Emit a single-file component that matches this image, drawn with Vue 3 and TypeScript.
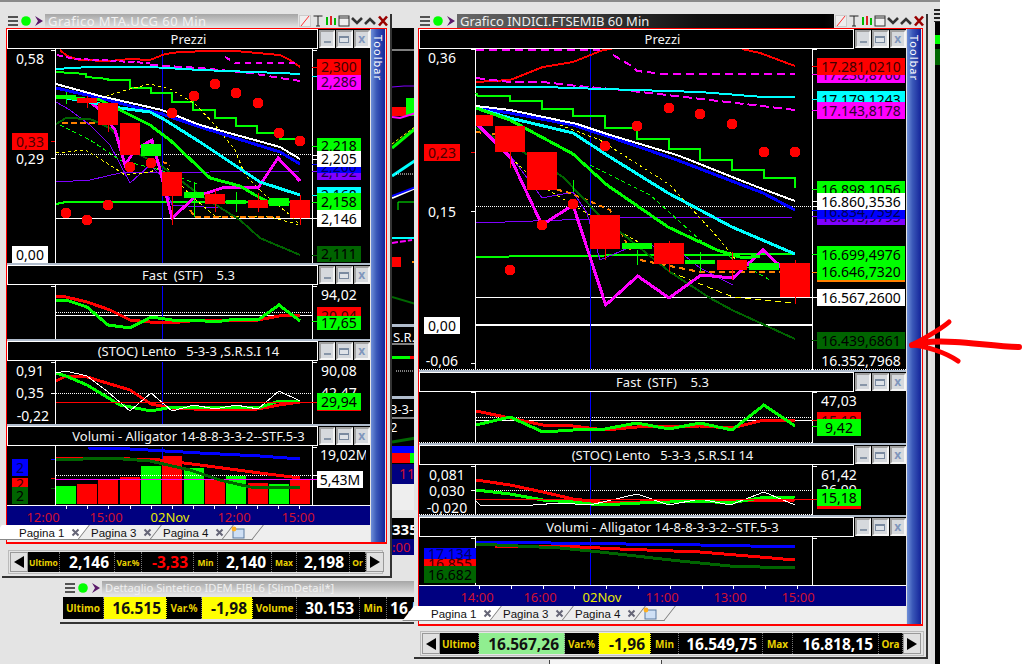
<script setup lang="ts">
type Line = { c: string; w: number; p: string; d?: string }
type Tag = [number, number, number, number, string, string, string]
type Bar = [number, number, number, number, string]
interface Panel {
  title: string; x: number; y: number; w: number; h: number; l: number; r: number
  lines: Line[]; bars?: Bar[]; dots?: [number, number][]; tags: Tag[]
}
interface Cell { t: string; w: number; k: string }
interface Tab { t: string; on?: boolean }

const R = '#ff0000', G = '#00ff00', B = '#0000ff', M = '#ff00ff', C = '#00ffff', W = '#ffffff'
const DG = '#006400', P = '#7f00ff', Y = '#ffff00', O = '#ff8000', K = '#000000', N = 'transparent'
const DOT = '1 1'

const ln = (c: string, w: number, p: string, d?: string): Line => ({ c, w, p, d })
const txt = (x: number, y: number, w: number, t: string): Tag => [x, y - 8, w, 16, N, W, t]

const leftPanels: Panel[] = [
  {
    title: 'Prezzi', x: 7, y: 49, w: 364, h: 214, l: 55.5, r: 312.5,
    lines: [
      ln(W, 1, '56,218 312,218'), ln(W, 1, '56,154.5 312,154.5', DOT), ln(B, 1, '162.5,50 162.5,263'),
      ln(R, 2, '60,50 67,56 80,60 110,61 130,59 150,60 165,54 180,52 210,51 235,51 280,55 290,60 300,67'),
      ln(M, 2, '57,55 75,59 100,60 130,62 150,63', '6 3'), ln(M, 2, '225,57 232,61 235,63 300,63', '6 5'),
      ln(M, 2, '150,65 200,68 250,73 280,78 300,81', '8 4'),
      ln(C, 2, '56,69 90,67 150,67 200,70 280,73 300,74'),
      ln(G, 2, '56,72 86,74 86,77 108,79 108,80 130,80 130,88 151,88 151,93 172,93 172,102 193,102 193,110 215,110 215,118 236,118 236,126 257,126 257,133 280,133 280,139 300,139'),
      ln(G, 2, '56,204 66,202 300,202'),
      ln(P, 1, '56,182 90,180 120,173 300,171'),
      ln(P, 1, '56,102 70,110 90,125 110,145 130,183 150,165 160,175 172,205 220,208'),
      ln(Y, 1, '100,98 130,89 150,84 170,89 195,104 215,125 235,150 245,175 265,195 290,215 300,225', '3 3'),
      ln(Y, 1, '56,153 85,150 110,165 125,175 150,172 165,166 190,195 215,216 270,217 300,225', '3 3'),
      ln(G, 1, '60,125 90,140 120,160 160,170 200,185', '4 3'),
      ln(O, 2, '62,123 95,123', '6 3'), ln(O, 2, '163,162 170,165', '4 3'), ln(O, 2, '190,210 195,217 280,217', '6 3'),
      ln(DG, 2, '56,124 66,118 90,119 110,128 130,150 160,165 200,195 240,220 260,238 300,255'),
      ln(M, 3, '88,100 100,110 115,130 125,165 135,150 152,140 160,170 172,218 195,197 225,187 258,188 278,158 300,181'),
      ln(B, 3, '56,88 100,98 162,114 200,127 280,152 300,164'),
      ln(W, 2, '56,84 100,96 162,110 200,125 280,147 300,159'),
      ln(C, 3, '56,96 100,104 120,108 150,112 165,120 200,142 260,182 300,195'),
      ln(G, 3, '56,97 100,100 130,115 150,125 170,140 210,178 240,186 255,195 270,203'),
      ln(G, 1, '66,92 66,104'), ln(G, 1, '194,182 194,217'), ln(G, 1, '236,192 236,212'),
      ln(R, 1, '87,96 87,108'), ln(R, 1, '108,125 108,132'), ln(R, 1, '172,195 172,225'), ln(R, 1, '215,190 215,212'), ln(R, 1, '258,193 258,212'), ln(R, 1, '300,195 300,225'),
      ln(R, 1, '312,67 317,67'), ln(C, 1, '312,76 317,76'), ln(G, 1, '312,146 317,146'), ln(W, 1, '312,155 317,155'), ln(W, 1, '312,159 317,159'), ln(B, 1, '312,164 317,164'), ln(P, 1, '312,171 317,171'),
      ln(C, 1, '312,195 317,195'), ln(G, 1, '312,202 317,202'), ln(W, 1, '312,218 317,218'), ln(DG, 1, '312,255 317,255'),
      ln(R, 1, '51,141 55,141'), ln(W, 1, '51,158 55,158'), ln(W, 1, '51,50 55,50'), ln(W, 1, '312,50 317,50')
    ],
    bars: [[56, 95, 20, 4, G], [77, 98, 20, 5, R], [98, 103, 20, 22, R], [120, 123, 20, 32, R], [141, 144, 20, 12, G], [162, 172, 20, 24, R], [184, 192, 20, 6, G], [205, 194, 20, 10, R], [226, 200, 20, 4, G], [248, 200, 20, 8, R], [269, 198, 20, 8, G], [290, 200, 20, 18, R]],
    dots: [[66, 213], [87, 220], [108, 205], [130, 167], [151, 163], [172, 113], [194, 96], [215, 84], [236, 93], [258, 103], [279, 133], [300, 141]],
    tags: [
      txt(12, 59, 36, '0,58'), [12, 133, 36, 17, R, '#4a0000', '0,33'], txt(12, 159, 36, '0,29'), [12, 246, 36, 17, W, K, '0,00'],
      [317, 74, 44, 16, M, '#300030', '2,286'], [317, 59, 44, 16, R, '#400000', '2,300'],
      [317, 138, 44, 16, G, K, '2,218'], [317, 164, 44, 16, P, '#14003a', '2,192'], [317, 161, 44, 12, B, '#000050', '2,200'], [317, 151, 44, 16, W, K, '2,205'],
      [317, 187, 44, 16, C, K, '2,168'], [317, 193, 44, 17, G, K, '2,158'], [317, 210, 44, 17, W, K, '2,146'], [317, 246, 44, 16, DG, K, '2,111']
    ]
  },
  {
    title: 'Fast  (STF)    5.3', x: 7, y: 285, w: 364, h: 54, l: 55.5, r: 312.5,
    lines: [
      ln(W, 1, '56,312.5 312,312.5', DOT), ln(W, 1, '56,315.5 312,315.5'), ln(B, 1, '162.5,286 162.5,339'),
      ln(R, 3, '56,296 66,297 87,302 110,310 130,320 150,322 170,323 200,320 236,320 258,320 279,316 300,315'),
      ln(G, 3, '56,300 66,300 87,307 108,325 130,328 151,317 172,320 194,320 215,322 236,319 258,320 279,305 300,321'),
      ln(W, 1, '312,286 317,286'), ln(W, 1, '51,286 55,286'), ln(G, 1, '312,321 317,321')
    ],
    tags: [txt(320, 295, 38, '94,02'), [317, 307, 44, 17, R, '#400000', '20,04'], [317, 316, 44, 14, G, K, '17,65']]
  },
  {
    title: '(STOC) Lento   5-3-3 ,S.R.S.I 14', x: 7, y: 361, w: 364, h: 63, l: 55.5, r: 312.5,
    lines: [
      ln(W, 1, '56,393.5 312,393.5', DOT), ln(B, 1, '162.5,362 162.5,424'),
      ln(R, 3, '56,381 66,376 87,377 130,390 151,404 172,408 194,409 215,410 258,409 279,405 300,402'),
      ln(G, 3, '56,373 66,376 87,385 120,405 151,411 172,407 194,407 215,408 236,407 258,408 279,401 300,402'),
      ln(W, 1, '56,373 66,371 87,376 108,392 130,411 151,393 172,411 194,405 215,409 236,405 258,409 279,391 300,401'),
      ln(R, 1, '56,402.5 317,402.5'), ln(W, 1, '51,393.5 55,393.5'), ln(W, 1, '51,362 55,362'), ln(W, 1, '312,362 317,362')
    ],
    tags: [
      txt(12, 371, 36, '0,91'), txt(12, 393, 36, '0,35'), txt(15, 416, 36, '-0,22'),
      txt(320, 371, 38, '90,08'), txt(320, 393, 38, '42,47'), [317, 409, 44, 2, R, N, ''], [317, 393, 44, 17, G, K, '29,94']
    ]
  },
  {
    title: 'Volumi - Alligator 14-8-8-3-3-2--STF.5-3', x: 7, y: 446, w: 364, h: 59, l: 55.5, r: 312.5,
    lines: [
      ln(W, 1, '56,475 312,475', DOT),
      ln(B, 1, '162.5,447 162.5,460'),
      ln(M, 1, '56,479.5 317,479.5'),
      ln(B, 3, '88,448 130,449 200,453 260,456 300,459'),
      ln(R, 3, '56,458 100,458 160,460 200,465 260,473 300,478'),
      ln(DG, 3, '56,460 110,458 150,461 190,470 220,480 250,487 300,488'),
      ln(W, 1, '312,447 317,447'), ln(B, 1, '51,459.5 55,459.5'), ln(R, 1, '51,478.5 55,478.5'), ln(DG, 1, '51,488.5 55,488.5'), ln(W, 1, '312,475 317,475')
    ],
    bars: [[56, 486, 20, 18, G], [77, 484, 20, 20, R], [98, 480, 20, 24, R], [120, 477, 20, 27, R], [141, 466, 20, 38, G], [162, 456, 20, 48, R], [184, 468, 20, 36, G], [205, 480, 20, 24, R], [226, 476, 20, 28, G], [248, 483, 20, 21, R], [269, 484, 20, 20, G], [290, 480, 20, 24, R]],
    tags: [
      [12, 459, 16, 17, B, '#000060', '2'], [12, 478, 16, 12, R, '#400000', '2'], [12, 487, 16, 17, DG, K, '2'],
      txt(320, 455, 46, '19,02M'), [317, 471, 46, 17, W, K, '5,43M']
    ]
  }
]

const rightPanels: Panel[] = [
  {
    title: 'Prezzi', x: 419, y: 49, w: 488, h: 321, l: 475.5, r: 812.5,
    lines: [
      ln(W, 1, '476,297.5 812,297.5'), ln(W, 2, '476,325 812,325'), ln(W, 1, '476,206.5 812,206.5', DOT), ln(W, 1, '419,369.5 907,369.5', DOT), ln(B, 1, '590.5,49 590.5,369'),
      ln(R, 2, '476,82 510,80 543,67 573,62 603,50 612,49'), ln(R, 2, '742,49 760,53 795,66'),
      ln(M, 2, '476,50 600,50', '8 5'), ln(M, 2, '613,55 630,65 637,71 655,73 662,74 795,74', '8 5'),
      ln(M, 2, '476,78 510,82 543,82 577,86 623,90 667,95 710,100 753,105 795,110', '9 4'),
      ln(C, 2, '476,87 543,87 603,89 700,92 763,97 795,97'),
      ln(G, 2, '476,93 478,96 510,96 510,101 542,101 542,109 573,109 573,116 605,116 605,128 637,128 637,139 669,139 669,149 700,149 700,160 732,160 732,170 764,170 764,178 795,178 795,188'),
      ln(G, 2, '476,257 543,256 795,254'),
      ln(P, 1, '476,223 620,218 795,217'),
      ln(P, 1, '476,125 510,155 542,198 573,192 587,213 600,260 640,243 680,252 700,268 733,285'),
      ln(Y, 1, '476,125 510,157 540,185 590,215 640,243', '3 3'), ln(Y, 1, '560,125 600,140 670,185 720,240 740,265', '3 3'),
      ln(Y, 1, '670,272 733,297 743,298 795,303', '6 4'), ln(G, 1, '590,165 650,195 700,240 770,280', '4 3'),
      ln(O, 2, '476,132 500,135', '5 3'), ln(O, 2, '540,185 570,193 610,210 630,250', '5 4'), ln(O, 2, '640,260 700,272 780,272', '6 4'),
      ln(DG, 2, '476,128 523,152 563,177 597,213 630,240 670,272 710,298 732,310 795,339'),
      ln(M, 3, '478,125 510,157 542,225 573,205 590,257 605.7,305 637.7,276 669,298 701,275 733,278 763,250 795,280'),
      ln(B, 3, '476,108 510,113 573,125 610,137 677,160 763,193 795,210'),
      ln(W, 2, '476,106 510,110 577,124 610,135 677,155 760,188 795,201'),
      ln(C, 3, '476,108 510,118 573,133 610,157 668,193 732,227 795,254'),
      ln(G, 3, '476,108 510,120 573,154 607,185 668,227 717,250 743,258 760,256'),
      ln(G, 1, '573,180 573,192'), ln(G, 1, '637,250 637,265'), ln(G, 1, '700,252 700,272'), ln(R, 1, '510,150 510,168'), ln(R, 1, '605,245 605,260'), ln(R, 1, '669,241 669,272'), ln(R, 1, '732,252 732,280'), ln(R, 1, '795,260 795,304'),
      ln(R, 1, '812,66 817,66'), ln(M, 1, '812,74 817,74'), ln(C, 1, '812,99 817,99'), ln(M, 1, '812,110 817,110'), ln(G, 1, '812,189 817,189'), ln(W, 1, '812,201 817,201'), ln(W, 1, '812,206 817,206'), ln(B, 1, '812,210 817,210'), ln(P, 1, '812,216 817,216'),
      ln(G, 1, '812,254 817,254'), ln(O, 1, '812,272 817,272'), ln(W, 1, '812,297 817,297'), ln(DG, 1, '812,340 817,340'),
      ln(R, 1, '471,152 475,152'), ln(W, 1, '471,211 475,211'), ln(W, 1, '471,49 475,49'), ln(W, 1, '471,363 475,363'), ln(W, 1, '812,49 817,49')
    ],
    bars: [[476, 115, 17, 11, R], [495, 126, 30, 26, R], [527, 152, 30, 38, R], [590, 215, 30, 34, R], [622, 243, 30, 6, G], [654, 243, 30, 21, R], [685, 260, 30, 4, G], [717, 260, 30, 10, R], [749, 263, 30, 7, G], [780, 263, 30, 34, R]],
    dots: [[510, 270], [542, 225], [573, 204], [605, 146], [637, 126], [669, 108], [700, 114], [732, 124], [764, 152], [795, 152]],
    tags: [
      txt(424, 58, 36, '0,36'), [424, 144, 36, 17, R, '#4a0000', '0,23'], txt(424, 212, 36, '0,15'), [424, 317, 36, 17, W, K, '0,00'], txt(424, 361, 36, '-0,06'),
      [817, 66, 88, 17, M, '#300030', '17.236,8700'], [817, 58, 88, 17, R, '#400000', '17.281,0210'],
      [817, 91, 88, 17, C, K, '17.179,1243'], [817, 102, 88, 17, M, '#300030', '17.143,8178'],
      [817, 181, 88, 17, G, K, '16.898,1056'], [817, 209, 88, 16, P, '#14003a', '16.813,9795'], [817, 204, 88, 15, B, '#000050', '16.834,7592'], [817, 193, 88, 17, W, K, '16.860,3536'],
      [817, 265, 88, 17, O, K, ''], [817, 246, 88, 17, G, K, '16.699,4976'], [817, 263, 88, 17, G, K, '16.646,7320'],
      [817, 289, 88, 17, W, K, '16.567,2600'], [817, 332, 88, 17, DG, K, '16.439,6861'], txt(817, 361, 88, '16.352,7968')
    ]
  },
  {
    title: 'Fast  (STF)    5.3', x: 419, y: 392, w: 488, h: 51, l: 475.5, r: 812.5,
    lines: [
      ln(W, 1, '476,417.5 812,417.5', DOT), ln(W, 1, '476,420.5 812,420.5'), ln(W, 1, '419,442.5 812,442.5', DOT), ln(B, 1, '590.5,392 590.5,443'),
      ln(R, 3, '476,411 510,418 543,425 573,426 605,430 637,427 700,426 732,428 764,420 795,421'),
      ln(G, 3, '476,425 510,417 543,432 573,430 605,429 637,423 669,429 700,423 732,430 764,405 795,426'),
      ln(R, 1, '812,420 817,420'), ln(G, 1, '812,426 817,426'), ln(W, 1, '812,392 817,392'), ln(W, 1, '471,392 475,392')
    ],
    tags: [txt(817, 401, 44, '47,03'), [817, 412, 44, 17, R, '#400000', '15,18'], [817, 419, 44, 17, G, K, '9,42']]
  },
  {
    title: '(STOC) Lento   5-3-3 ,S.R.S.I 14', x: 419, y: 465, w: 488, h: 50, l: 475.5, r: 812.5,
    lines: [
      ln(W, 1, '476,490.5 812,490.5', DOT), ln(W, 1, '419,514.5 812,514.5', DOT), ln(B, 1, '590.5,466 590.5,515'),
      ln(R, 3, '476,480 510,485 543,492 573,499 600,502 640,502 700,501 760,501 795,500'),
      ln(G, 3, '476,490 510,494 543,500 573,502 600,505 640,503 700,501 730,503 760,498 795,497'),
      ln(W, 1, '476,501 480,505 520,506 560,503 590,505 637,494 669,505 700,499 730,505 764,492 795,505'),
      ln(R, 1, '476,499.5 817,499.5'), ln(W, 1, '471,490 475,490'), ln(W, 1, '471,466 475,466'), ln(W, 1, '812,466 817,466')
    ],
    tags: [
      txt(424, 475, 46, '0,081'), txt(424, 491, 46, '0,030'), txt(424, 508, 46, '-0,020'),
      txt(820, 475, 38, '61,42'), txt(820, 490, 38, '26,99'), [817, 492, 44, 17, R, N, ''], [817, 489, 44, 17, G, K, '15,18']
    ]
  },
  {
    title: 'Volumi - Alligator 14-8-8-3-3-2--STF.5-3', x: 419, y: 537, w: 488, h: 48, l: 475.5, r: 812.5,
    lines: [
      ln(B, 1, '590.5,538 590.5,585'),
      ln(B, 3, '476,542 700,545 750,546 795,547'),
      ln(R, 3, '495,546 560,546 620,549 700,552 760,557 795,560'),
      ln(DG, 3, '476,544 560,548 600,552 680,561 730,566 760,567 795,567'),
      ln(W, 1, '471,538 475,538'), ln(W, 1, '812,538 817,538')
    ],
    tags: [[424, 548, 52, 12, B, '#000060', '17.134'], [424, 559, 52, 10, R, '#400000', '16.855'], [424, 566, 52, 17, DG, K, '16.682']]
  }
]

const vb = (p: Panel) => `${p.x} ${p.y} ${p.w} ${p.h}`
const tagBox = (p: Panel, t: Tag) => ({
  left: `${t[0] - p.x}px`, top: `${t[1] - p.y}px`, width: `${t[2]}px`, height: `${t[3]}px`,
  lineHeight: `${t[3]}px`, background: t[4], color: t[5]
})
const range = (a: number, n: number, s: number) => Array.from({ length: n }, (_, i) => a + i * s)

const axisLeft = {
  ticks: range(66, 12, 21.2).map((v) => Math.round(v) - 7),
  labels: [{ t: '12:00', x: 36 }, { t: '15:00', x: 99 }, { t: '02Nov', x: 163, y: 1 }, { t: '12:00', x: 227 }, { t: '15:00', x: 291 }]
}
const axisRight = {
  ticks: range(479, 11, 31.8).map((v) => Math.round(v) - 419),
  labels: [{ t: '14:00', x: 58 }, { t: '16:00', x: 121 }, { t: '02Nov', x: 183, y: 1 }, { t: '11:00', x: 243 }, { t: '13:00', x: 311 }, { t: '15:00', x: 379 }]
}
const tabs: Tab[] = [{ t: 'Pagina 1', on: true }, { t: 'Pagina 3' }, { t: 'Pagina 4' }]

const statusLeft: Cell[] = [
  { t: 'Ultimo', w: 32, k: 'lab' }, { t: '2,146', w: 55, k: 'val' }, { t: 'Var.%', w: 27, k: 'lab' }, { t: '-3,33', w: 52, k: 'neg' },
  { t: 'Min', w: 24, k: 'lab' }, { t: '2,140', w: 54, k: 'val' }, { t: 'Max', w: 25, k: 'lab' }, { t: '2,198', w: 53, k: 'val' }, { t: 'Or', w: 16, k: 'lab' }
]
const statusRight: Cell[] = [
  { t: 'Ultimo', w: 39, k: 'lab' }, { t: '16.567,26', w: 86, k: 'grn' }, { t: 'Var.%', w: 34, k: 'lab' }, { t: '-1,96', w: 52, k: 'yel' },
  { t: 'Min', w: 28, k: 'lab' }, { t: '16.549,75', w: 84, k: 'val' }, { t: 'Max', w: 30, k: 'lab' }, { t: '16.818,15', w: 86, k: 'val' }, { t: 'Ora', w: 24, k: 'lab' }
]
const slim: Cell[] = [
  { t: 'Ultimo', w: 41, k: 'lab' }, { t: '16.515', w: 63, k: 'yel' }, { t: 'Var.%', w: 35, k: 'lab' }, { t: '-1,98', w: 51, k: 'yel' },
  { t: 'Volume', w: 44, k: 'lab' }, { t: '30.153', w: 63, k: 'val' }, { t: 'Min', w: 27, k: 'lab' }, { t: '16.5', w: 40, k: 'val' }
]
</script>

<template>
  <div class="desk">
    <div class="topline"></div>
    <div class="outside"></div>

    <!-- far right background window -->
    <div class="win-far">
      <div class="far-bar"></div>
      <div class="far-body">
        <i class="far-a"></i><i class="far-b"></i>
      </div>
    </div>

    <!-- window behind, between the two charts -->
    <div class="win-mid">
      <svg class="mid-svg" viewBox="392 28 24 436">
        <polyline points="392,50 416,50" stroke="#fff" fill="none" />
        <polyline points="392,87 404,86 416,86" stroke="#7f00ff" fill="none" />
        <rect x="392" y="107" width="14" height="9" fill="#f00" />
        <rect x="406" y="98" width="10" height="18" fill="#0f0" />
        <polyline points="392,117 400,118 416,113" stroke="#f0f" stroke-width="2" fill="none" />
        <polyline points="392,148 416,128" stroke="#0f0" stroke-width="3" fill="none" />
        <polyline points="392,144 416,126" stroke="#ff0" stroke-dasharray="3 2" fill="none" />
        <polyline points="392,176 416,160" stroke="#0ff" stroke-width="3" fill="none" />
        <polyline points="396,174 416,174" stroke="#fff" stroke-dasharray="1 1" fill="none" />
        <polyline points="392,198 416,188" stroke="#fff" stroke-width="2" fill="none" />
        <polyline points="392,196 416,187" stroke="#00f" stroke-width="2" fill="none" />
        <polyline points="398,210 398,202 416,202" stroke="#0f0" fill="none" />
        <polyline points="392,238 416,238" stroke="#0ff" stroke-width="2" fill="none" />
        <polyline points="392,243 412,240" stroke="#f0f" stroke-width="2" stroke-dasharray="6 2" fill="none" />
        <rect x="392" y="257" width="9" height="10" fill="#f00" />
        <polyline points="412,262 416,262" stroke="#f80" stroke-width="2" fill="none" />
        <polyline points="392,297 416,304" stroke="#060" stroke-width="2" fill="none" />
        <rect x="392" y="324" width="24" height="3" fill="#b0bccc" />
        <polyline points="392,344 416,344" stroke="#fff" fill="none" />
        <rect x="392" y="356" width="24" height="3" fill="#0f0" />
        <rect x="410" y="356" width="6" height="3" fill="#f00" />
        <polyline points="396,371 416,371" stroke="#fff" stroke-dasharray="1 1" fill="none" />
        <rect x="392" y="396" width="24" height="3" fill="#b0bccc" />
        <polyline points="392,418 416,418" stroke="#fff" fill="none" />
        <polyline points="392,442 416,438" stroke="#060" stroke-width="3" fill="none" />
        <rect x="392" y="446" width="24" height="7" fill="#00f" />
        <rect x="392" y="453" width="18" height="10" fill="#f00" />
        <rect x="410" y="453" width="6" height="10" fill="#0f0" />
      </svg>
      <span class="mid-t1">S.R.</span>
      <span class="mid-t2">3-3-2</span>
      <div class="mid-axis"><span>11</span></div>
      <div class="mid-tabs"></div>
      <div class="mid-val">335</div>
      <div class="mid-time">:00</div>
    </div>

    <!-- left chart window -->
    <section class="win win-left">
      <header class="title title-off">
        <span class="t-ico"><svg viewBox="0 0 12 12"><path d="M1 2h10M1 6h10M1 10h10" stroke="#222" stroke-width="1.6" /></svg></span>
        <span class="t-ico"><svg viewBox="0 0 12 12"><circle cx="6" cy="6" r="4.8" fill="#0f0" /></svg></span>
        <span class="t-ico"><svg viewBox="0 0 12 12"><path d="M2 1l8 5-8 5 3-5z" fill="#5a1a6a" /></svg></span>
        <span class="t-text">Grafico MTA.UCG 60 Min</span>
        <span class="t-tools">
          <svg viewBox="0 0 12 12"><rect x=".5" y=".5" width="11" height="11" fill="#eee" stroke="#ccc" /><path d="M2 11L10 1" stroke="#f33" /></svg>
          <svg viewBox="0 0 12 12"><path d="M1.5 1h9M6 1v10M4 11h4" stroke="#222" fill="none" /></svg>
          <svg viewBox="0 0 12 12"><path d="M2 2v8" stroke="#0b0" stroke-width="2" /><path d="M6 1v9" stroke="#d22" stroke-width="2" /><path d="M10 3v7" stroke="#0b0" stroke-width="2" /></svg>
          <svg viewBox="0 0 12 12"><rect x="1" y="1" width="10" height="10" fill="#eee" stroke="#333" /><path d="M1 3h10" stroke="#333" /></svg>
          <svg viewBox="0 0 12 12"><path d="M1 3l5 5 5-5" stroke="#333" stroke-width="2.6" fill="none" /></svg>
          <svg viewBox="0 0 12 12"><path d="M1 9l5-5 5 5" stroke="#333" stroke-width="2.6" fill="none" /></svg>
          <svg viewBox="0 0 12 12"><path d="M2 1.5l8 9M10 1.5l-8 9" stroke="#900" stroke-width="2.6" /></svg>
        </span>
      </header>
      <div class="frame">
        <div class="stack">
          <article v-for="p in leftPanels" :key="p.title" class="panel">
            <div class="phead">
              <div class="ptitle">{{ p.title }}</div>
              <div class="pbtns">
                <button class="pbtn"><i class="b-min"></i></button>
                <button class="pbtn"><i class="b-max"></i></button>
                <button class="pbtn b-x">x</button>
              </div>
            </div>
            <div class="chart" :style="{ height: p.h + 'px' }">
              <svg class="plot" :viewBox="vb(p)" :width="p.w" :height="p.h">
                <line :x1="p.l" :x2="p.l" :y1="p.y" :y2="p.y + p.h" stroke="#fff" />
                <line :x1="p.r" :x2="p.r" :y1="p.y" :y2="p.y + p.h" stroke="#fff" />
                <rect v-for="(b, i) in p.bars" :key="'b' + i" :x="b[0]" :y="b[1]" :width="b[2]" :height="b[3]" :fill="b[4]" v-show="p.title.startsWith('Volumi')" />
                <polyline v-for="(l, i) in p.lines" :key="i" :points="l.p" :stroke="l.c" :stroke-width="l.w" :stroke-dasharray="l.d" fill="none" />
                <rect v-for="(b, i) in p.bars" :key="'c' + i" :x="b[0]" :y="b[1]" :width="b[2]" :height="b[3]" :fill="b[4]" v-show="!p.title.startsWith('Volumi')" />
                <circle v-for="(d, i) in p.dots" :key="'d' + i" :cx="d[0]" :cy="d[1]" r="5.5" fill="#f00" />
              </svg>
              <span v-for="(t, i) in p.tags" :key="i" class="tag" :style="tagBox(p, t)">{{ t[6] }}</span>
            </div>
          </article>
          <div class="axis axis-l">
            <i v-for="x in axisLeft.ticks" :key="x" class="tick" :style="{ left: x + 'px' }"></i>
            <span v-for="l in axisLeft.labels" :key="l.x" class="alabel" :class="{ ay: l.y }" :style="{ left: l.x + 'px' }">{{ l.t }}</span>
          </div>
          <nav class="tabs tabs-l">
            <span v-for="t in tabs" :key="t.t" class="tab" :class="{ on: t.on }">{{ t.t }}<svg viewBox="0 0 9 9"><path d="M1.5 1.5l6 6M7.5 1.5l-6 6" stroke="#667" stroke-width="2" /></svg></span>
            <span class="tab tab-new"><svg viewBox="0 0 16 14"><rect x="3" y="3" width="11" height="9" fill="#cfe0f5" stroke="#5a7aa0" /><circle cx="4" cy="3" r="2.4" fill="#ffb020" /></svg></span>
          </nav>
        </div>
        <aside class="toolbar"><span>Toolbar</span></aside>
      </div>
      <div class="status st-l">
        <button class="sbtn"><i class="tri-l"></i></button>
        <span v-for="c in statusLeft" :key="c.t" class="cell" :class="c.k" :style="{ width: c.w + 'px' }">{{ c.t }}</span>
        <button class="sbtn"><i class="tri-r"></i></button>
      </div>
    </section>

    <!-- slim detail window -->
    <section class="win-slim">
      <header class="title title-off title-slim">
        <span class="t-ico"><svg viewBox="0 0 12 12"><path d="M1 2h10M1 6h10M1 10h10" stroke="#222" stroke-width="1.6" /></svg></span>
        <span class="t-ico"><svg viewBox="0 0 12 12"><circle cx="6" cy="6" r="4.8" fill="#0f0" /></svg></span>
        <span class="t-ico"><svg viewBox="0 0 12 12"><path d="M2 1l8 5-8 5 3-5z" fill="#5a1a6a" /></svg></span>
        <span class="t-text">Dettaglio Sintetico IDEM.FIBL6 [SlimDetail*]</span>
      </header>
      <div class="slim-row">
        <span v-for="c in slim" :key="c.t" class="cell big" :class="c.k" :style="{ width: c.w + 'px' }">{{ c.t }}</span>
      </div>
    </section>

    <!-- right chart window -->
    <section class="win win-right">
      <header class="title title-on">
        <span class="t-ico"><svg viewBox="0 0 12 12"><path d="M1 2h10M1 6h10M1 10h10" stroke="#222" stroke-width="1.6" /></svg></span>
        <span class="t-ico"><svg viewBox="0 0 12 12"><circle cx="6" cy="6" r="4.8" fill="#0f0" /></svg></span>
        <span class="t-ico"><svg viewBox="0 0 12 12"><path d="M2 1l8 5-8 5 3-5z" fill="#5a1a6a" /></svg></span>
        <span class="t-text">Grafico INDICI.FTSEMIB 60 Min</span>
        <span class="t-tools">
          <svg viewBox="0 0 12 12"><rect x=".5" y=".5" width="11" height="11" fill="#eee" stroke="#ccc" /><path d="M2 11L10 1" stroke="#f33" /></svg>
          <svg viewBox="0 0 12 12"><path d="M1.5 1h9M6 1v10M4 11h4" stroke="#222" fill="none" /></svg>
          <svg viewBox="0 0 12 12"><path d="M2 2v8" stroke="#0b0" stroke-width="2" /><path d="M6 1v9" stroke="#d22" stroke-width="2" /><path d="M10 3v7" stroke="#0b0" stroke-width="2" /></svg>
          <svg viewBox="0 0 12 12"><rect x="1" y="1" width="10" height="10" fill="#eee" stroke="#333" /><path d="M1 3h10" stroke="#333" /></svg>
          <svg viewBox="0 0 12 12"><path d="M1 3l5 5 5-5" stroke="#333" stroke-width="2.6" fill="none" /></svg>
          <svg viewBox="0 0 12 12"><path d="M1 9l5-5 5 5" stroke="#333" stroke-width="2.6" fill="none" /></svg>
          <svg viewBox="0 0 12 12"><path d="M2 1.5l8 9M10 1.5l-8 9" stroke="#900" stroke-width="2.6" /></svg>
        </span>
      </header>
      <div class="frame">
        <div class="stack">
          <article v-for="p in rightPanels" :key="p.title" class="panel">
            <div class="phead">
              <div class="ptitle">{{ p.title }}</div>
              <div class="pbtns">
                <button class="pbtn"><i class="b-min"></i></button>
                <button class="pbtn"><i class="b-max"></i></button>
                <button class="pbtn b-x">x</button>
              </div>
            </div>
            <div class="chart" :style="{ height: p.h + 'px' }">
              <svg class="plot" :viewBox="vb(p)" :width="p.w" :height="p.h">
                <line :x1="p.l" :x2="p.l" :y1="p.y" :y2="p.y + p.h" stroke="#fff" />
                <line :x1="p.r" :x2="p.r" :y1="p.y" :y2="p.y + p.h" stroke="#fff" />
                <polyline v-for="(l, i) in p.lines" :key="i" :points="l.p" :stroke="l.c" :stroke-width="l.w" :stroke-dasharray="l.d" fill="none" />
                <rect v-for="(b, i) in p.bars" :key="'c' + i" :x="b[0]" :y="b[1]" :width="b[2]" :height="b[3]" :fill="b[4]" />
                <circle v-for="(d, i) in p.dots" :key="'d' + i" :cx="d[0]" :cy="d[1]" r="5.5" fill="#f00" />
              </svg>
              <span v-for="(t, i) in p.tags" :key="i" class="tag" :style="tagBox(p, t)">{{ t[6] }}</span>
            </div>
          </article>
          <div class="axis axis-r">
            <i v-for="x in axisRight.ticks" :key="x" class="tick" :style="{ left: x + 'px' }"></i>
            <span v-for="l in axisRight.labels" :key="l.x" class="alabel" :class="{ ay: l.y }" :style="{ left: l.x + 'px' }">{{ l.t }}</span>
          </div>
          <nav class="tabs tabs-r">
            <span v-for="t in tabs" :key="t.t" class="tab" :class="{ on: t.on }">{{ t.t }}<svg viewBox="0 0 9 9"><path d="M1.5 1.5l6 6M7.5 1.5l-6 6" stroke="#667" stroke-width="2" /></svg></span>
            <span class="tab tab-new"><svg viewBox="0 0 16 14"><rect x="3" y="3" width="11" height="9" fill="#cfe0f5" stroke="#5a7aa0" /><circle cx="4" cy="3" r="2.4" fill="#ffb020" /></svg></span>
          </nav>
        </div>
        <aside class="toolbar"><span>Toolbar</span></aside>
      </div>
      <div class="status st-r">
        <button class="sbtn"><i class="tri-l"></i></button>
        <span v-for="c in statusRight" :key="c.t" class="cell big" :class="c.k" :style="{ width: c.w + 'px' }">{{ c.t }}</span>
        <button class="sbtn"><i class="tri-r"></i></button>
      </div>
    </section>
    <div class="below"></div>

    <!-- hand drawn arrow over the screenshot -->
    <svg class="arrow" viewBox="905 315 117 52" width="117" height="52">
      <path d="M912 345C925 341 940 341 955 342C975 343 1000 347 1019 347" fill="none" stroke="#f00" stroke-width="6" stroke-linecap="round" />
      <path d="M912 345C925 338 940 330 949 322M912 345C925 346 945 352 958 361" fill="none" stroke="#f00" stroke-width="5" stroke-linecap="round" />
    </svg>
  </div>
</template>

<style>
html, body { margin: 0; background: #fff; overflow: hidden; }
</style>

<style scoped>
.desk {
  position: relative; width: 1022px; height: 664px; overflow: hidden; background: #e4e4e4;
  font-family: "Noto Sans", "Open Sans", sans-serif; font-size: 14px;
}
.topline { height: 2px; background: #8a8a8a; }
.outside { position: absolute; left: 940px; top: 0; right: 0; bottom: 0; background: #fff; }
.arrow { position: absolute; left: 905px; top: 315px; z-index: 5; }

.win-far { position: absolute; left: 931px; top: 9px; width: 9px; height: 655px; background: #e0e0e0; }
.far-bar { height: 13px; margin-left: 3px; background: repeating-linear-gradient(#222 0 2px, #ddd 2px 4px); }
.far-body { position: relative; height: 642px; margin-left: 4px; background: #000; }
.far-a { position: absolute; left: 0; top: 13px; width: 5px; height: 9px; background: #0f0; }
.far-b { position: absolute; left: 0; top: 27px; width: 5px; height: 16px; background: #060; }

.win-mid { position: absolute; left: 392px; top: 28px; width: 24px; height: 527px; background: #000; overflow: hidden; color: #fff; font-size: 13px; }
.mid-svg { position: absolute; left: 0; top: 0; width: 24px; height: 436px; }
.mid-t1 { position: absolute; left: 1px; top: 300px; }
.mid-t2 { position: absolute; left: -2px; top: 372px; }
.mid-axis { position: absolute; left: 0; top: 436px; width: 24px; height: 20px; background: #000080; color: #d01030; font-size: 14px; line-height: 20px; text-align: right; }
.mid-axis span { margin-right: 1px; }
.mid-tabs { position: absolute; left: 0; top: 456px; width: 24px; height: 26px; background: #eee; border-bottom: 2px solid #f00; }
.mid-val { position: absolute; left: 0; top: 482px; width: 24px; height: 22px; line-height: 22px; font-weight: 700; font-size: 15px; border-top: 8px solid #e4e4e4; }
.mid-time { position: absolute; left: 0; top: 511px; width: 24px; height: 16px; line-height: 16px; background: #000080; color: #d01030; }

.win { position: absolute; box-sizing: border-box; display: flex; flex-direction: column; background: #e4e4e4; border-right: 2px solid #333; border-bottom: 2px solid #333; }
.win-left { left: 2px; top: 14px; width: 390px; height: 564px; padding-left: 4px; z-index: 2; }
.win-right { left: 414px; top: 14px; width: 514px; height: 645px; padding-left: 4px; z-index: 3; }

.title { display: flex; align-items: center; height: 14px; flex: none; overflow: hidden; }
.title-off { background: linear-gradient(#a6a6a6, #c4c4c4 50%, #e4e4e4); color: #f2f2f2; }
.title-on { background: linear-gradient(90deg, #777, #111 55%, #000 80%, #444); color: #eeeeee; }
.title-on .t-ico, .title-on .t-tools { background: #e4e4e4; }
.t-ico { display: flex; align-items: center; justify-content: center; width: 13px; height: 14px; background: #e4e4e4; flex: none; }
.t-ico svg { width: 12px; height: 12px; }
.t-text { margin-left: 3px; font-size: 13px; line-height: 14px; white-space: nowrap; }
.win-left .t-text { letter-spacing: .45px; }
.title-slim .t-text { font-size: 11.2px; }
.t-tools { display: flex; gap: 1px; align-items: center; height: 14px; margin-left: auto; padding: 0 1px; flex: none; background: #e4e4e4; }
.t-tools svg { width: 12px; height: 12px; }

.frame { display: flex; box-sizing: border-box; flex: none; border: 1px solid #f00; border-bottom-width: 2px; background: #e4e4e4; gap: 1px; }
.win-left .frame { width: 381px; height: 516px; }
.win-right .frame { width: 505px; height: 598px; }
.stack { display: flex; flex-direction: column; min-width: 0; flex: 1; background: #b0bccc; }
.panel + .panel { margin-top: 2px; }
.phead { display: flex; height: 20px; background: #d8d8d8; }
.ptitle {
  flex: 1; box-sizing: border-box; border: 1px solid #fff; background: #000; color: #f4f4f4; text-align: center;
  padding-left: 52px; font-size: 13px; line-height: 18px; white-space: pre;
}
.pbtns { display: flex; width: 52px; flex: none; gap: 1px; padding: 1px 0 1px 1px; box-sizing: border-box; background: #000; }
.pbtn {
  flex: 1; padding: 0; display: flex; align-items: center; justify-content: center;
  border: 2px solid #f4f4f4; border-top-color: #a0a0a0; border-left-color: #a0a0a0;
  background: #d6d9dd; color: #7f96bc; font: 700 12px/1 "Noto Sans", sans-serif;
}
.b-min { width: 7px; height: 2px; margin-top: 5px; background: #8896a8; }
.b-max { width: 8px; height: 4px; background: #dfe3e8; border: 1px solid #7a8aa0; border-top-width: 2px; }
.chart { position: relative; background: #000; overflow: hidden; }
.plot { position: absolute; left: 0; top: 0; display: block; shape-rendering: crispEdges; }
.tag { position: absolute; text-align: center; font-size: 14px; white-space: nowrap; overflow: hidden; }

.axis { position: relative; background: #000080; border-top: 1px solid #fff; box-sizing: border-box; flex: none; }
.axis-l { height: 20px; }
.axis-r { height: 21px; }
.tick { position: absolute; top: 0; width: 1px; height: 3px; background: #fff; }
.alabel { position: absolute; top: 2px; width: 40px; margin-left: -20px; text-align: center; color: #d01030; font-size: 13px; line-height: 18px; }
.ay { color: #e8e800; }

.tabs { display: flex; align-items: flex-start; background: #eeeeee; flex: 1; font-family: "Liberation Sans", sans-serif; font-size: 11.5px; padding-left: 1px; }
.tab { position: relative; display: flex; align-items: center; width: 72px; height: 15px; box-sizing: border-box; padding-left: 11px; color: #111; white-space: nowrap; z-index: 1; }
.tab svg { width: 9px; height: 9px; margin-left: 7px; flex: none; }
.tab::after {
  content: ""; position: absolute; z-index: -1; left: -6px; right: -4px; top: 0; bottom: 0; border-right: 1px solid #777; border-bottom: 1px solid #888; transform: skewX(-38deg);
}
.tab.on::after { background: #fff; left: -12px; }
.tab-new { width: 30px; padding-left: 6px; }
.tab-new svg { width: 16px; height: 14px; margin: 0; }

.toolbar { width: 14px; flex: none; background: linear-gradient(90deg, #7090d8, #3a58b8 40%, #14249a); margin-right: 1px; display: flex; justify-content: center; }
.toolbar span { writing-mode: vertical-rl; color: #fff; font-size: 11px; margin-top: 6px; letter-spacing: 1px; }

.status { display: flex; flex: none; box-sizing: border-box; border: 1px solid #bbb; }
.st-l { height: 24px; width: 375px; margin: 6px 0 0 2px; padding: 1px 1px; }
.st-r { height: 25px; width: 504px; margin: 5px 0 0 2px; padding: 1px 1px; }
.sbtn { width: 18px; padding: 0; display: flex; align-items: center; justify-content: center; background: #e0e0e0; border: 1px solid #999; flex: none; }
.tri-l { border: 6px solid transparent; border-right: 10px solid #000; border-left: 0; }
.tri-r { border: 6px solid transparent; border-left: 10px solid #000; border-right: 0; }
.cell { box-sizing: border-box; flex: none; display: flex; align-items: center; justify-content: flex-end; overflow: hidden; background: #000; color: #fff; padding-right: 5px; border-right: 1px dotted #777; font-weight: 700; font-size: 15.5px; white-space: nowrap; }
.cell.lab { justify-content: center; padding: 0; color: #e8d000; font-size: 8.5px; }
.cell.big.lab { font-size: 10px; }
.neg { color: #ff0000; }
.grn { background: #90ee90; color: #111; }
.yel { background: #ffff00; color: #111; border-right: 1px dotted #000; }

.win-slim { position: absolute; left: 60px; top: 581px; width: 358px; height: 43px; box-sizing: border-box; border-bottom: 2px solid #333; background: #e4e4e4; overflow: hidden; z-index: 1; padding-left: 3px; }
.title-slim { width: 360px; color: #f0f0f0; }
.slim-row { display: flex; height: 22px; margin-top: 2px; }

.below { position: absolute; left: 549px; top: 660px; width: 113px; height: 4px; background: #f4f4f4; border: solid #444; border-width: 0 1px; box-sizing: border-box; }
</style>
